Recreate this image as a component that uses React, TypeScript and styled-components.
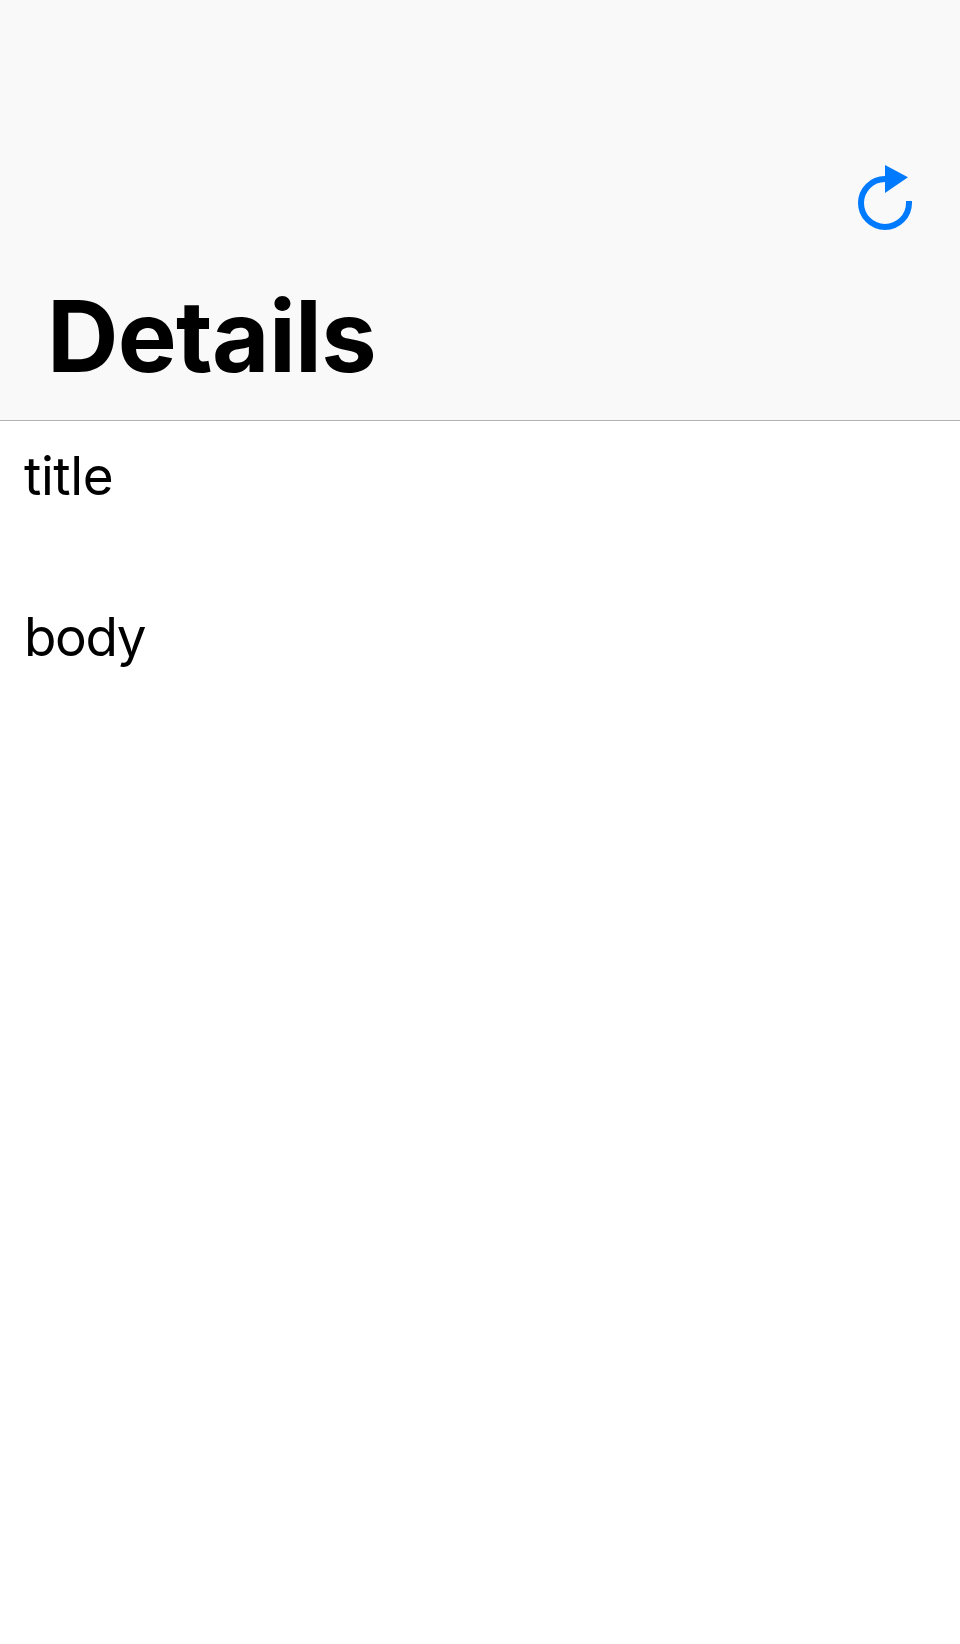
import React from "react";
import styled, { createGlobalStyle } from "styled-components";

const GlobalStyle = createGlobalStyle`
  body {
    margin: 0;
    background: #ffffff;
    color: #000000;
    font-family: Inter, "Liberation Sans", sans-serif;
  }
`;

const Screen = styled.div`
  display: flex;
  flex-direction: column;
  min-height: 1644px;
`;

const NavBar = styled.header`
  display: flex;
  flex-direction: column;
  box-sizing: border-box;
  height: 421px;
  padding-top: 132px;
  background: #f9f9f9;
  border-bottom: 1px solid #b2b2b2;
`;

const Toolbar = styled.div`
  display: flex;
  justify-content: flex-end;
  align-items: center;
  height: 132px;
  padding-right: 48px;
`;

const RefreshButton = styled.button`
  display: flex;
  padding: 0;
  border: 0;
  background: none;
  color: #007aff;
`;

const LargeTitle = styled.h1`
  margin: 12px 0 0;
  padding-left: 47px;
  font-size: 99px;
  line-height: 120px;
  font-weight: 700;
  letter-spacing: -0.7px;
`;

const Content = styled.main`
  display: flex;
  flex-direction: column;
  gap: 101px;
  padding: 25px 24px 0;
`;

const Label = styled.p<{ $tracking: number }>`
  margin: 0;
  font-size: 53px;
  line-height: 60px;
  letter-spacing: ${({ $tracking }) => $tracking}px;
`;

const RefreshIcon = () => (
  <svg width="54" height="66" viewBox="0 0 54 66" fill="none" aria-hidden="true">
    <path d="M51 36V38A24 24 0 1 1 27 14" stroke="currentColor" strokeWidth="6" />
    <path d="M27 0L50 12.3L27 28Z" fill="currentColor" />
  </svg>
);

export default function App() {
  return (
    <Screen>
      <GlobalStyle />
      <NavBar>
        <Toolbar>
          <RefreshButton aria-label="Refresh">
            <RefreshIcon />
          </RefreshButton>
        </Toolbar>
        <LargeTitle>Details</LargeTitle>
      </NavBar>
      <Content>
        <Label $tracking={-0.4}>title</Label>
        <Label $tracking={-1.4}>body</Label>
      </Content>
    </Screen>
  );
}
